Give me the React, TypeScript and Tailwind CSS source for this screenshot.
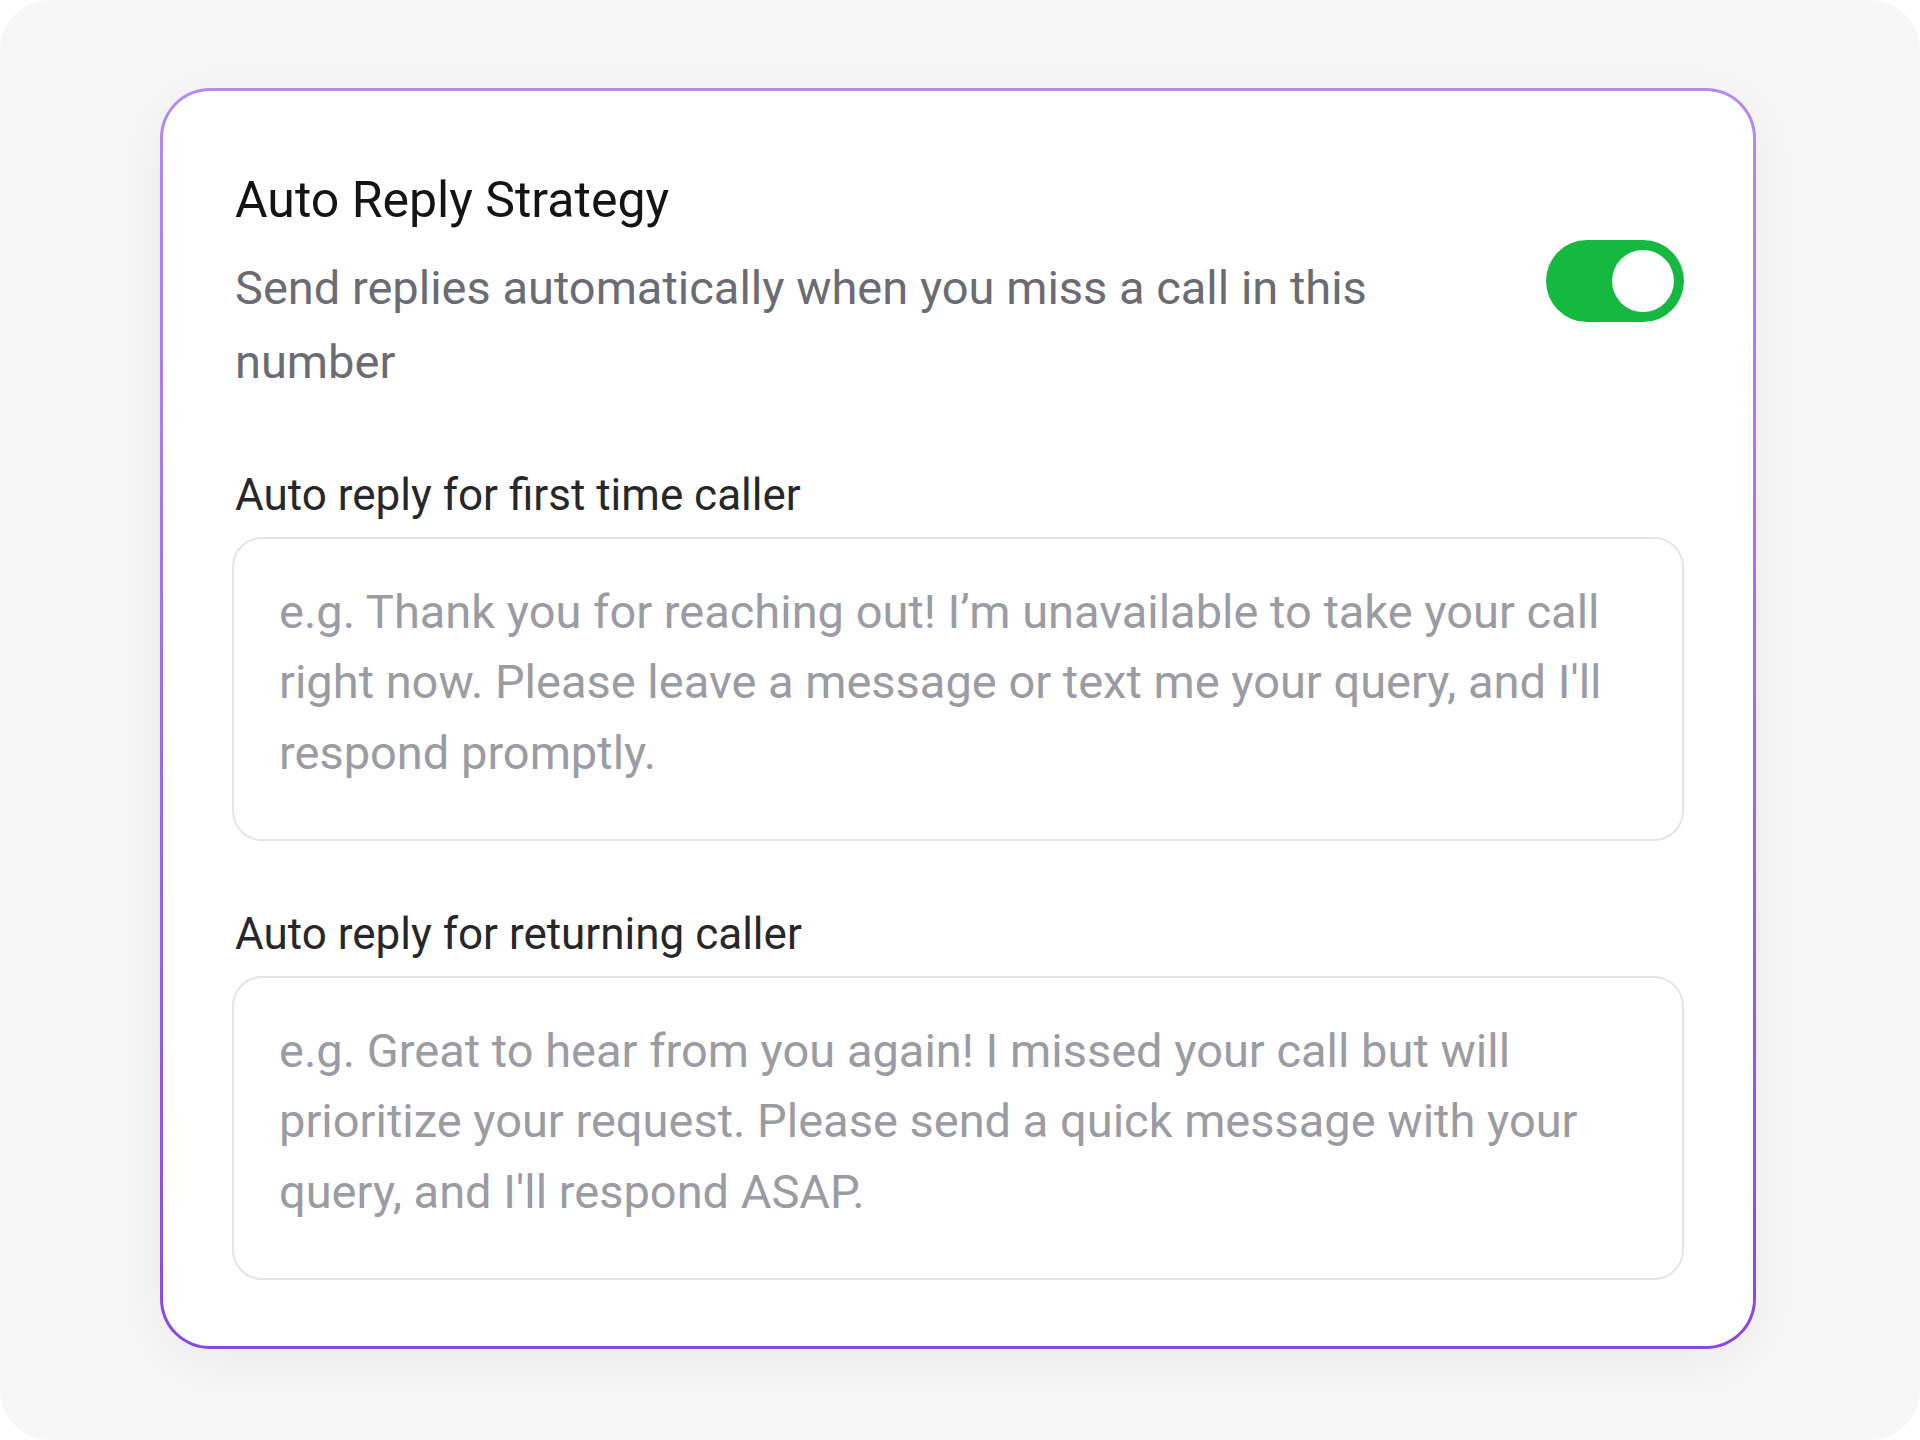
import { useState } from "react";

const font = { fontFamily: "Roboto, 'Noto Sans', sans-serif" };

function Toggle({ on, onChange }: { on: boolean; onChange: (v: boolean) => void }) {
  return (
    <button
      type="button"
      role="switch"
      aria-checked={on}
      onClick={() => onChange(!on)}
      className={`flex h-[82px] w-[138px] shrink-0 items-center rounded-full p-[10px] transition-colors ${
        on ? "justify-end bg-[#16b93f]" : "justify-start bg-[#d4d4d8]"
      }`}
    >
      <span className="block h-[62px] w-[62px] rounded-full bg-white" />
    </button>
  );
}

function ReplyField({ label, placeholder }: { label: string; placeholder: string }) {
  return (
    <div className="flex flex-col">
      <label className="pl-[3px] text-[44px] leading-[52px] text-[#27272a]">{label}</label>
      <textarea
        placeholder={placeholder}
        className="mt-[16px] h-[304px] w-full resize-none rounded-[30px] border-2 border-[#e5e5e8] bg-white px-[45px] pt-[38px] text-[47px] leading-[70.5px] text-[#27272a] outline-none placeholder:text-[#9b9ba3]"
        style={font}
      />
    </div>
  );
}

export default function App() {
  const [enabled, setEnabled] = useState(true);

  return (
    <div className="min-h-screen bg-white" style={font}>
      <div className="h-[1440px] w-[1920px] rounded-[50px] bg-[#f7f7f8] pl-[160px] pt-[88px]">
        <div className="w-[1596px] rounded-[50px] bg-linear-to-b from-[#b48af2] to-[#8a47e6] p-[3px] shadow-[0_12px_60px_rgba(0,0,0,0.06)]">
          <div className="flex flex-col rounded-[47px] bg-white px-[69px] pb-[66px] pt-[81px]">
            <div className="flex items-start justify-between">
              <div className="pl-[3px]">
                <h2 className="text-[50px] leading-[57.6px] text-[#141416]">
                  Auto Reply Strategy
                </h2>
                <p className="mt-[21px] max-w-[1220px] text-[47px] leading-[74px] text-[#6b6b73]">
                  Send replies automatically when you miss a call in this number
                </p>
              </div>
              <div className="mt-[68px]">
                <Toggle on={enabled} onChange={setEnabled} />
              </div>
            </div>

            <div className="mt-[70px] flex flex-col gap-[67px]">
              <ReplyField
                label="Auto reply for first time caller"
                placeholder="e.g. Thank you for reaching out! I’m unavailable to take your call right now. Please leave a message or text me your query, and I'll respond promptly."
              />
              <ReplyField
                label="Auto reply for returning caller"
                placeholder="e.g. Great to hear from you again! I missed your call but will prioritize your request. Please send a quick message with your query, and I'll respond ASAP."
              />
            </div>
          </div>
        </div>
      </div>
    </div>
  );
}
